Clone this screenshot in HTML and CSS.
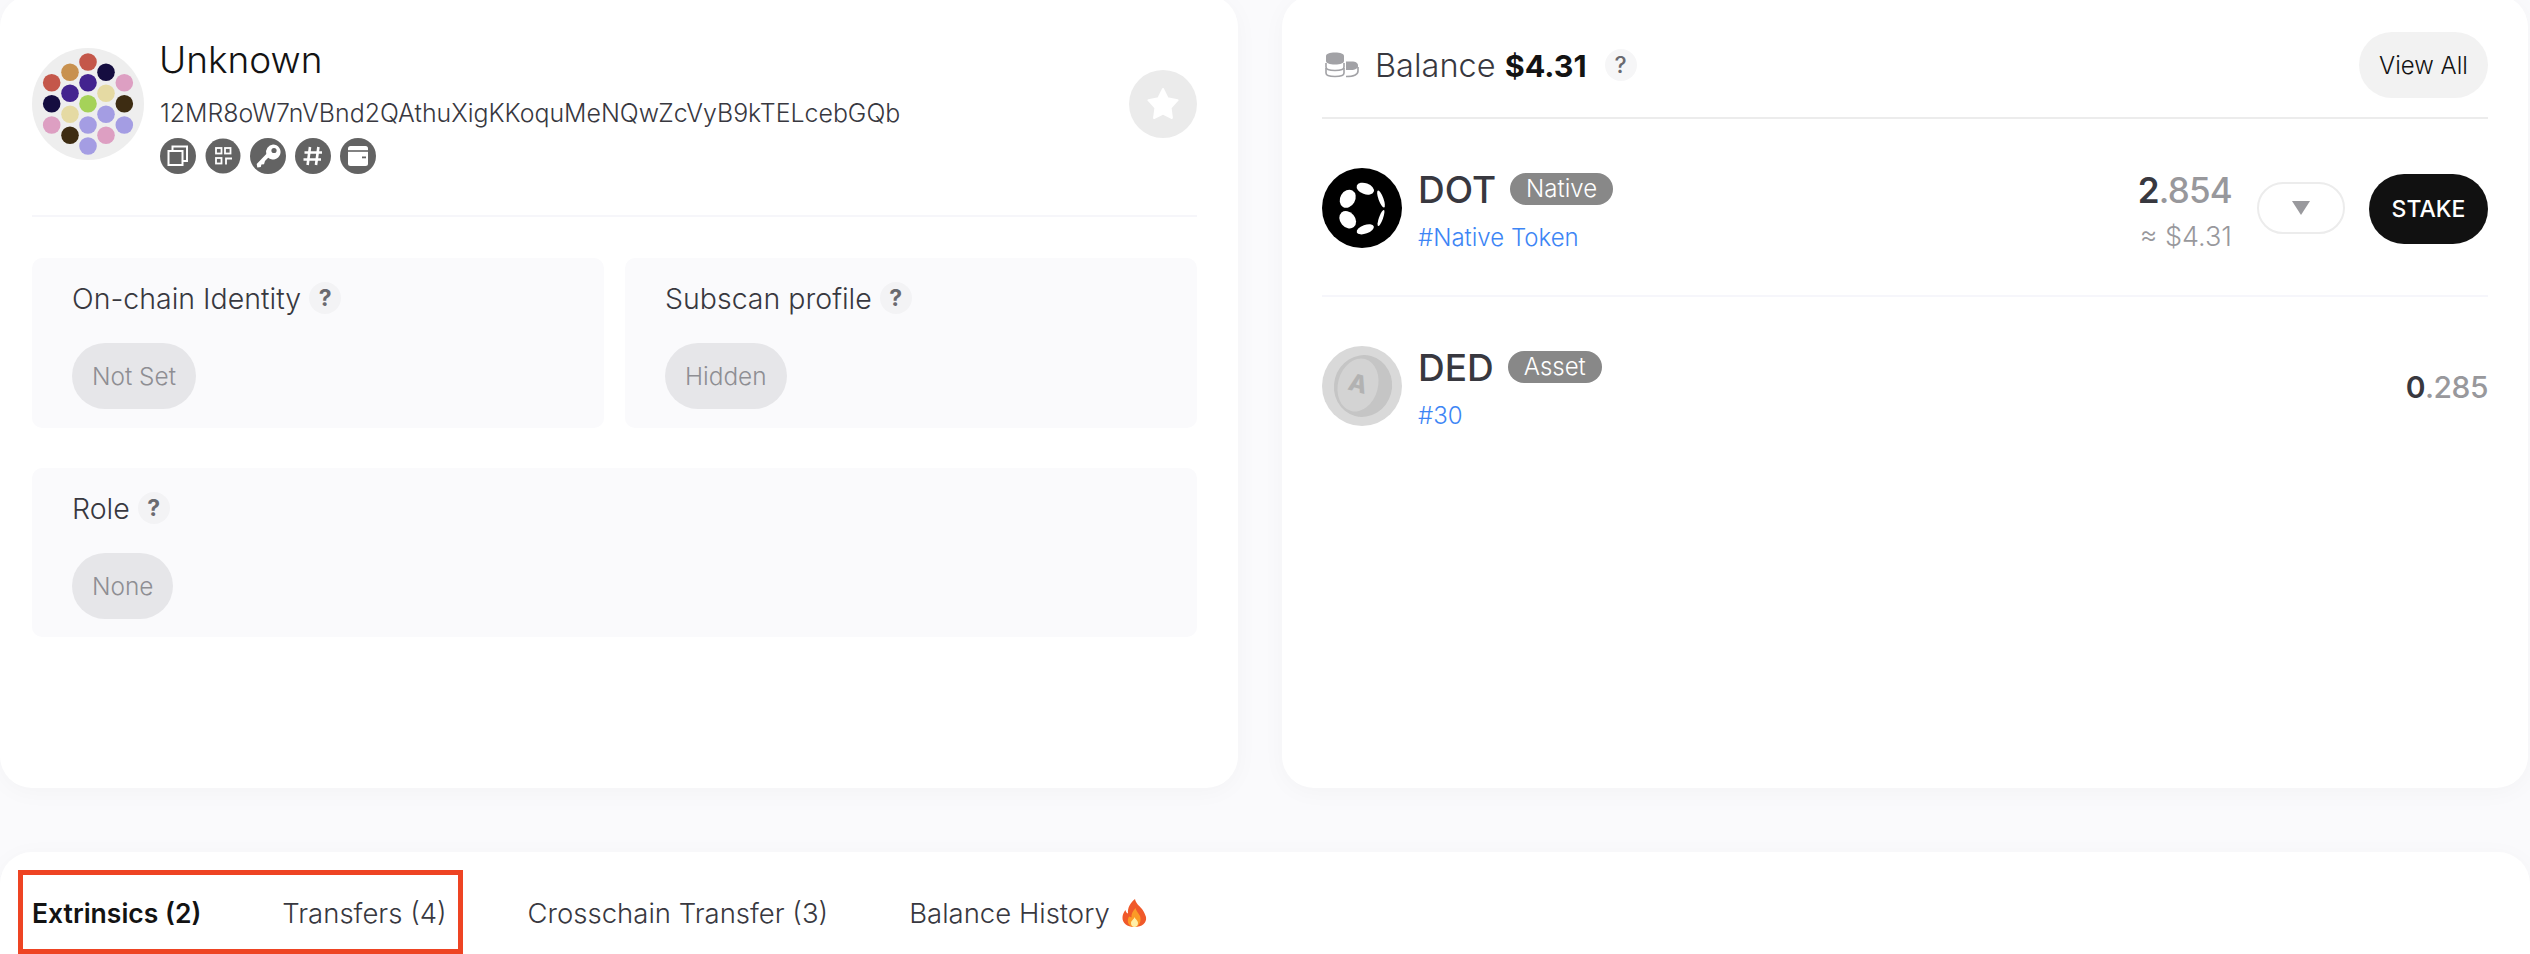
FILE: index.html
```html
<!DOCTYPE html>
<html lang="en">
<head>
  <meta charset="UTF-8">
  <title>Account</title>
  <link rel="stylesheet" href="styles.css">
</head>
<body>
  <div class="top-row">
    <section class="card account-card">
      <div class="profile">
        <svg class="avatar" viewBox="0 0 112 112">
          <circle cx="56" cy="56" r="56" fill="#eeeeee"/>
          <circle cx="56" cy="14" r="8.8" fill="#c4574a"/>
          <circle cx="38" cy="24.3" r="8.8" fill="#c8914f"/>
          <circle cx="74" cy="24.3" r="8.8" fill="#150d40"/>
          <circle cx="19.7" cy="34.7" r="8.8" fill="#c4574a"/>
          <circle cx="56" cy="34.7" r="8.8" fill="#43238f"/>
          <circle cx="92.3" cy="34.7" r="8.8" fill="#dd9fc2"/>
          <circle cx="38" cy="45.3" r="8.8" fill="#43238f"/>
          <circle cx="74" cy="45.3" r="8.8" fill="#e5daa3"/>
          <circle cx="19.7" cy="55.7" r="8.8" fill="#150d40"/>
          <circle cx="56" cy="55.7" r="8.8" fill="#a5d259"/>
          <circle cx="92.3" cy="55.7" r="8.8" fill="#3d2c12"/>
          <circle cx="38" cy="66.3" r="8.8" fill="#e5daa3"/>
          <circle cx="74" cy="66.3" r="8.8" fill="#a49de3"/>
          <circle cx="19.7" cy="77" r="8.8" fill="#dd9fc2"/>
          <circle cx="56" cy="77" r="8.8" fill="#a49de3"/>
          <circle cx="92.3" cy="77" r="8.8" fill="#a49de3"/>
          <circle cx="38" cy="87.3" r="8.8" fill="#3d2c12"/>
          <circle cx="74" cy="87.3" r="8.8" fill="#dd9fc2"/>
          <circle cx="56" cy="98" r="8.8" fill="#a49de3"/>
        </svg>
        <div class="profile-info">
          <div class="name">Unknown</div>
          <div class="address">12MR8oW7nVBnd2QAthuXigKKoquMeNQwZcVyB9kTELcebGQb</div>
          <div class="icon-row">
            <svg class="round-icon" viewBox="0 0 36 36">
              <circle cx="18" cy="18" r="18" fill="#636363"/>
              <rect x="8.5" y="13" width="14" height="14" fill="none" stroke="#fff" stroke-width="2"/>
              <path d="M12.5 13V8.500H27V23H22.500" fill="none" stroke="#fff" stroke-width="2"/>
            </svg>
            <svg class="round-icon" viewBox="0 0 36 36">
              <circle cx="18" cy="18" r="17.5" fill="#636363"/>
              <g fill="none" stroke="#fff" stroke-width="1.8">
                <rect x="11" y="10" width="5.5" height="5.500"/>
                <rect x="20" y="10" width="5.5" height="5.500"/>
                <rect x="11" y="20" width="5.5" height="5.500"/>
                <path d="M21 26.500V20.500H27"/>
              </g>
            </svg>
            <svg class="round-icon" viewBox="0 0 36 36">
              <circle cx="18" cy="18" r="18" fill="#636363"/>
              <path d="M23 6.500a7.500 7.500 0 1 1-4.800 13.200L15 23l-1 3.300-2.600.2-.6 2.600-3.500.4-.6-3.600 9.600-10A7.500 7.500 0 0 1 23 6.500z" fill="#fff"/>
              <circle cx="24" cy="12.500" r="2.600" fill="#636363"/>
            </svg>
            <svg class="round-icon" viewBox="0 0 36 36">
              <circle cx="18" cy="18" r="18" fill="#636363"/>
              <path d="M15 9l-2.400 18M23.400 9L21 27M9.500 14.500h17.500M8.500 21.500h17.500" fill="none" stroke="#fff" stroke-width="2.600"/>
            </svg>
            <svg class="round-icon" viewBox="0 0 36 36">
              <circle cx="18" cy="18" r="18" fill="#636363"/>
              <rect x="8" y="8" width="20" height="20" rx="2.500" fill="#fff"/>
              <path d="M8 13h20" stroke="#636363" stroke-width="1.600"/>
              <rect x="22" y="18.500" width="4" height="1.800" fill="#636363"/>
            </svg>
          </div>
        </div>
        <div class="star-btn">
          <svg viewBox="0 0 36 36" width="36" height="36">
            <path d="M18 3l4.600 9.300 10 1.900-7 7.700 1.300 10.100L18 27.600 9.100 32l1.300-10.100-7-7.700 10-1.900z" fill="#fff" stroke="#fff" stroke-width="2" stroke-linejoin="round"/>
          </svg>
        </div>
      </div>

      <div class="panel-grid">
        <div class="panel">
          <div class="panel-title">On-chain Identity <span class="help">?</span></div>
          <span class="pill">Not Set</span>
        </div>
        <div class="panel">
          <div class="panel-title">Subscan profile <span class="help">?</span></div>
          <span class="pill">Hidden</span>
        </div>
        <div class="panel panel-wide">
          <div class="panel-title">Role <span class="help">?</span></div>
          <span class="pill">None</span>
        </div>
      </div>
    </section>

    <section class="card balance-card">
      <div class="balance-head">
        <svg class="coins" viewBox="0 0 34 26">
          <path d="M1 4c0-2 3.500-3.500 9-3.500S19 2 19 4v5c0 2-3.500 3.500-9 3.500S1 11 1 9z" fill="#a2a2a6"/>
          <g fill="none" stroke="#a2a2a6" stroke-width="1.600">
            <path d="M1 11v4c0 2 3.500 3.500 9 3.500s9-1.500 9-3.500v-4"/>
            <path d="M1 16v5c0 2 3.500 3.500 9 3.500s9-1.500 9-3.500v-5"/>
            <path d="M21 24.500c6 0 12-1.500 12-5.500v-4"/>
          </g>
          <path d="M21 9.500h6c3.500 0 6 1.500 6 4v1c0 2-4 3.500-6 3.500h-6z" fill="#a2a2a6"/>
        </svg>
        <span class="balance-label">Balance <b>$4.31</b></span>
        <span class="help help-big">?</span>
        <button class="view-all">View All</button>
      </div>

      <div class="token-row token-row-line">
        <svg class="token-icon" viewBox="0 0 80 80">
          <circle cx="40" cy="40" r="40" fill="#000"/>
          <g fill="#fff">
            <ellipse cx="43.300" cy="20.700" rx="9" ry="5.500" transform="rotate(20 43.300 20.700)"/>
            <ellipse cx="25.700" cy="30.700" rx="7.500" ry="9.500" transform="rotate(30 25.700 30.700)"/>
            <ellipse cx="25.700" cy="51.700" rx="7.500" ry="9.500" transform="rotate(-40 25.700 51.700)"/>
            <ellipse cx="43.300" cy="61.300" rx="9" ry="4.300" transform="rotate(-20 43.300 61.300)"/>
            <ellipse cx="59" cy="31" rx="2.500" ry="9" transform="rotate(-20 59 31)"/>
            <ellipse cx="59" cy="50" rx="2" ry="8.500" transform="rotate(20 59 50)"/>
          </g>
        </svg>
        <div class="token-info">
          <div class="token-title"><span class="token-name">DOT</span><span class="badge">Native</span></div>
          <a class="token-link">#Native Token</a>
        </div>
        <div class="amount">
          <div class="amount-num"><b>2</b>.854</div>
          <div class="amount-usd">≈ $4.31</div>
        </div>
        <div class="dropdown"><span class="tri"></span></div>
        <button class="stake">STAKE</button>
      </div>

      <div class="token-row">
        <svg class="token-icon" viewBox="0 0 80 80">
          <circle cx="40" cy="40" r="40" fill="#d9d9d9"/>
          <ellipse cx="41" cy="40" rx="29" ry="31" fill="#c5c5c5" transform="rotate(15 41 40)"/>
          <ellipse cx="36" cy="39" rx="20" ry="27" fill="#d3d3d3" transform="rotate(15 36 39)"/>
          <text class="coin-letter" x="36" y="46" transform="rotate(15 36 38)">A</text>
        </svg>
        <div class="token-info">
          <div class="token-title"><span class="token-name">DED</span><span class="badge">Asset</span></div>
          <a class="token-link">#30</a>
        </div>
        <div class="amount amount-solo">
          <div class="amount-num"><b>0</b>.285</div>
        </div>
      </div>
    </section>
  </div>

  <section class="card tabs-card">
    <div class="tabs">
      <span class="tab tab-active">Extrinsics (2)</span>
      <span class="tab">Transfers (4)</span>
      <span class="tab">Crosschain Transfer (3)</span>
      <span class="tab">Balance History
        <svg class="fire" viewBox="0 0 25 28">
          <path d="M13 0c1 5 4 6 7 10 2 3 3 5 4 8 1 6-4 10-11.500 10S0 24 .5 18c.2-3 1.500-5 3-7 .3 2 1 3 2.500 3.500C5.500 9 8 4 13 0z" fill="#f0592a"/>
          <path d="M13.500 9c.5 3 3 5 4.500 8 1.500 4 0 11-5.500 11S4.500 23 6.500 18.500c1-2 2 0 3 0C9 15 11 12 13.500 9z" fill="#fb9a27"/>
          <path d="M12.500 18c.5 2 3.500 3.500 3.500 6 0 2.500-1.500 4-3.500 4S9 26.500 9 24c0-2.500 3-3.500 3.500-6z" fill="#fff0a8"/>
        </svg>
      </span>
    </div>
    <div class="red-box"></div>
  </section>
</body>
</html>
```

FILE: styles.css
```css
:root {
  --page-bg: #fafafc;
  --text: #38383f;
  --text-dark: #131313;
  --muted: #98989c;
  --blue: #3d85f5;
}

html, body {
  height: 954px;
  overflow: hidden;
}

body {
  margin: 0;
  background-color: var(--page-bg);
  color: var(--text);
  font-family: Inter, 'Noto Sans', sans-serif;
  font-weight: 300;
}

.top-row {
  display: flex;
  gap: 44px;
  margin-top: -5px;
  padding-right: 2px;
}

.card {
  background-color: #fff;
  border-radius: 32px;
  box-shadow: 0 4px 24px rgba(0,0,0,0.03);
  box-sizing: border-box;
}

.account-card {
  width: 1238px;
  height: 793px;
  padding: 43px 41px 0 32px;
}

.balance-card {
  flex: 1;
  height: 793px;
  padding: 37px 40px 0;
}

/* profile */
.profile {
  display: flex;
  align-items: flex-start;
  padding-bottom: 41px;
  border-bottom: 2px solid #f6f6fa;
}

.avatar {
  width: 112px;
  height: 112px;
  margin-top: 10px;
  margin-right: 15px;
  flex-shrink: 0;
}

.name {
  font-size: 37px;
  line-height: 44px;
  color: var(--text-dark);
}

.address {
  margin-top: 16px;
  margin-left: 1px;
  font-size: 24.900px;
  line-height: 30px;
  white-space: nowrap;
}

.icon-row {
  display: flex;
  gap: 9px;
  margin-top: 10px;
  margin-left: 1px;
}

.round-icon {
  width: 36px;
  height: 36px;
  display: block;
}

.star-btn {
  width: 68px;
  height: 68px;
  margin-top: 32px;
  margin-left: auto;
  border-radius: 50%;
  background-color: #ebebeb;
  display: flex;
  align-items: center;
  justify-content: center;
}

/* panels */
.panel-grid {
  display: grid;
  grid-template-columns: 572px 572px;
  column-gap: 21px;
  row-gap: 40px;
  margin-top: 41px;
}

.panel {
  height: 170px;
  box-sizing: border-box;
  padding: 24px 40px 0;
  background-color: #fafafc;
  border-radius: 10px;
}

.panel-wide {
  grid-column: 1 / 3;
  height: 169px;
}

.panel-title {
  display: flex;
  align-items: center;
  gap: 8px;
  height: 32px;
  font-size: 28.500px;
}

.help {
  display: inline-flex;
  align-items: center;
  justify-content: center;
  width: 32px;
  height: 32px;
  border-radius: 50%;
  background-color: #f3f3f5;
  color: #6a6a70;
  font-size: 23px;
  font-weight: 700;
}

.pill {
  display: inline-flex;
  align-items: center;
  height: 66px;
  margin-top: 29px;
  padding: 0 20px;
  border-radius: 33px;
  background-color: #e6e6e9;
  color: #8e8e93;
  font-size: 24.400px;
}

/* balance */
.balance-head {
  display: flex;
  align-items: center;
  padding-bottom: 19px;
  border-bottom: 2px solid #ececec;
}

.coins {
  width: 34px;
  height: 26px;
  margin-left: 3px;
  margin-right: 16px;
}

.balance-label {
  font-size: 32.500px;
}

.balance-label b {
  font-weight: 700;
  color: var(--text-dark);
  font-size: 30.500px;
}

.help-big {
  margin-left: 18px;
  font-weight: 500;
  background-color: #f6f6f7;
}

.view-all {
  margin-left: auto;
  width: 129px;
  height: 66px;
  border: none;
  border-radius: 33px;
  background-color: #f2f2f2;
  color: var(--text-dark);
  font-family: inherit;
  font-weight: 300;
  font-size: 24px;
}

.token-row {
  display: flex;
  align-items: flex-start;
  padding-top: 49px;
}

.token-row-line {
  height: 178px;
  box-sizing: border-box;
  border-bottom: 2px solid #f6f6fb;
}

.token-icon {
  width: 80px;
  height: 80px;
  margin-right: 16px;
  flex-shrink: 0;
}

.coin-letter {
  font-family: Inter, sans-serif;
  font-weight: 800;
  font-size: 24px;
  text-anchor: middle;
  fill: #b2b2b2;
}

.token-title {
  display: flex;
  align-items: center;
  height: 40px;
  margin-top: 1px;
}

.token-name {
  font-size: 37px;
  font-weight: 500;
}

.badge {
  margin-left: 14px;
  padding: 0 16px;
  height: 32px;
  line-height: 32px;
  border-radius: 16px;
  background-color: #888888;
  color: #fff;
  font-size: 24px;
}

.token-link {
  display: block;
  margin-top: 13px;
  line-height: 32px;
  font-size: 24px;
  color: var(--blue);
}

.amount {
  margin-top: 2px;
  margin-left: auto;
  text-align: right;
}

.amount-solo {
  margin-top: 21px;
}

.amount-num {
  font-size: 35px;
  line-height: 40px;
  font-weight: 500;
  letter-spacing: -0.8px;
  color: var(--muted);
}

.amount-solo .amount-num {
  font-size: 30px;
  letter-spacing: -0.5px;
}

.amount-num b {
  font-weight: 600;
  color: var(--text);
}

.amount-usd {
  margin-top: 11px;
  line-height: 32px;
  font-size: 27px;
  color: var(--muted);
}

.dropdown {
  width: 88px;
  height: 52px;
  margin-top: 14px;
  margin-left: 25px;
  box-sizing: border-box;
  border: 2px solid #ececec;
  border-radius: 26px;
  display: flex;
  align-items: center;
  justify-content: center;
}

.tri {
  width: 0;
  height: 0;
  border-left: 9px solid transparent;
  border-right: 9px solid transparent;
  border-top: 14px solid #99999d;
}

.stake {
  width: 119px;
  height: 70px;
  margin-top: 6px;
  margin-left: 24px;
  border: none;
  border-radius: 35px;
  background-color: #111;
  color: #fff;
  font-family: inherit;
  font-size: 23px;
  font-weight: 500;
}

/* tabs */
.tabs-card {
  position: relative;
  height: 102px;
  margin-top: 64px;
  padding: 41px 32px 0;
  border-radius: 32px 32px 0 0;
}

.tabs {
  display: flex;
  gap: 81px;
  font-size: 27.500px;
  line-height: 40px;
}

.tab {
  display: flex;
  align-items: center;
  gap: 12px;
  white-space: nowrap;
}

.tab-active {
  font-size: 26.500px;
  font-weight: 600;
  color: var(--text-dark);
}

.fire {
  width: 25px;
  height: 28px;
}

.red-box {
  position: absolute;
  left: 18px;
  top: 18px;
  width: 445px;
  height: 84px;
  box-sizing: border-box;
  border: 5px solid #ee4423;
}
```
